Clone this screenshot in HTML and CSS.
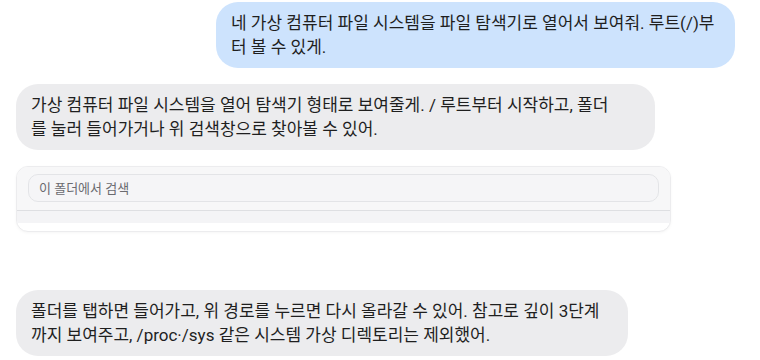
FILE: index.html
```html
<!DOCTYPE html>
<html lang="ko">
<head>
  <meta charset="UTF-8">
  <meta name="viewport" content="width=device-width, initial-scale=1">
  <title>파일 탐색기</title>
  <link rel="stylesheet" href="styles.css">
</head>
<body>
  <div class="chat">
    <!-- User message -->
    <div class="msg msg-user">
      <div class="bubble bubble-user">네 가상 컴퓨터 파일 시스템을 파일 탐색기로 열어서 보여줘. 루트(/)부터 볼 수 있게.</div>
    </div>

    <!-- Assistant reply -->
    <div class="msg msg-bot">
      <div class="bubble bubble-bot bubble-mid">가상 컴퓨터 파일 시스템을 열어 탐색기 형태로 보여줄게. / 루트부터 시작하고, 폴더를 눌러 들어가거나 위 검색창으로 찾아볼 수 있어.</div>
    </div>

    <!-- Explorer widget -->
    <div class="explorer">
      <div class="explorer-top">
        <input class="search" type="text" placeholder="이 폴더에서 검색">
      </div>
      <div class="explorer-path"></div>
    </div>

    <div class="msg msg-bot msg-last">
      <div class="bubble bubble-bot bubble-wide">폴더를 탭하면 들어가고, 위 경로를 누르면 다시 올라갈 수 있어. 참고로 깊이 3단계까지 보여주고, /proc·/sys 같은 시스템 가상 디렉토리는 제외했어.</div>
    </div>
  </div>
</body>
</html>
```

FILE: styles.css
```css
* {
  margin: 0;
  padding: 0;
  box-sizing: border-box;
}
body {
  font-family: Roboto, "Noto Sans CJK KR", sans-serif;
  background: #fff;
  color: #1f1f1f;
  font-size: 17px;
  line-height: 24px;
}
.chat {
  padding: 2px 25px 0 16px;
  display: flex;
  flex-direction: column;
}
/* Message rows */
.msg {
  display: flex;
}
.msg-user {
  justify-content: flex-end;
}
.msg-bot {
  justify-content: flex-start;
  margin-top: 16px;
}
.msg-last {
  margin-top: 58px;
}
.bubble {
  padding: 9px 15px;
  border-radius: 22px;
}
.bubble-user {
  background: #cde3fd;
  width: 519px;
}
.bubble-bot {
  background: #ececee;
}
.bubble-mid {
  width: 639px;
  padding-right: 40px;
}
.bubble-wide {
  width: 612px;
}
/* Explorer widget */
.explorer {
  margin-top: 16px;
  width: 655px;
  border: 1px solid #ececee;
  border-radius: 12px;
  overflow: hidden;
  background: #fff;
  box-shadow: 0 1px 3px rgba(0, 0, 0, 0.04);
}
.explorer-top {
  background: #f7f7f8;
  padding: 7px 11px 8px;
  border-bottom: 1px solid #dedfe2;
}
.search {
  display: block;
  width: 100%;
  height: 28px;
  border: 1px solid #e3e4e7;
  border-radius: 10px;
  background: #f5f5f7;
  padding: 0 10px;
  font-family: inherit;
  font-size: 13px;
  color: #333;
  outline: none;
}
.search::placeholder {
  color: #6b6b70;
}
.explorer-path {
  height: 12px;
  background: #f4f4f6;
  margin-bottom: 8px;
}
```
